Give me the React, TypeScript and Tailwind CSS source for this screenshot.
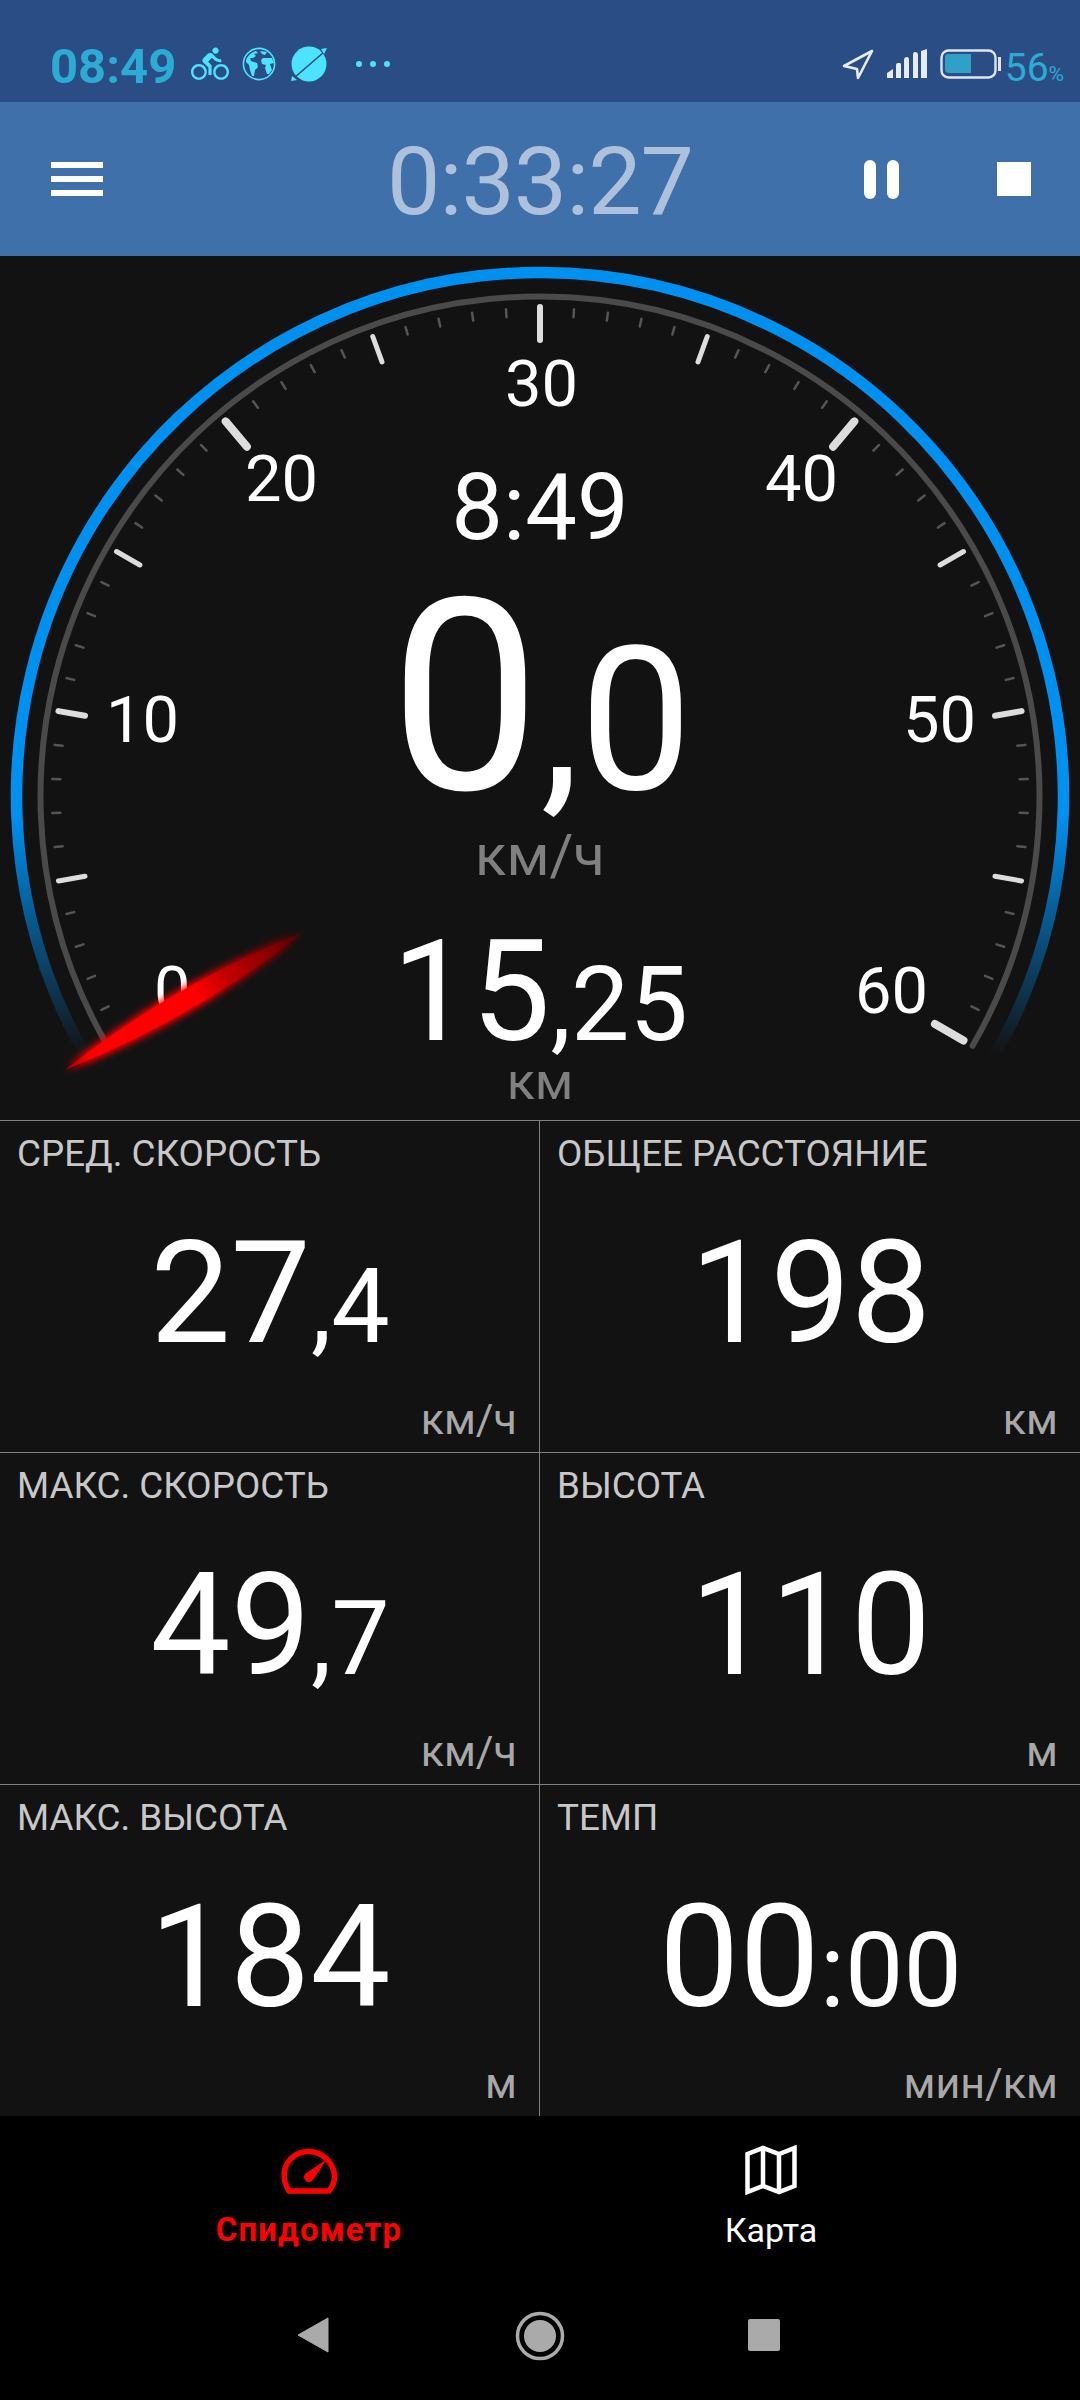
import React from "react";
import { MdDirectionsBike } from "react-icons/md";

const CX = 540;
const CY = 540; // centre of dial inside the gauge panel (796 - 256)

function polar(r: number, deg: number) {
  const a = (deg * Math.PI) / 180;
  return { x: CX + r * Math.sin(a), y: CY - r * Math.cos(a) };
}

function arc(r: number) {
  const s = polar(r, -120);
  const e = polar(r, 120);
  return `M ${s.x} ${s.y} A ${r} ${r} 0 1 1 ${e.x} ${e.y}`;
}

function Dial() {
  const ticks: React.ReactNode[] = [];
  for (let v = 0; v <= 60; v++) {
    const deg = -120 + v * 4;
    let r1 = 488, r2 = 480, w = 2.5, c = "#555555";
    if (v % 5 === 0) {
      c = "#dddddd";
      if (v % 10 === 0 && v !== 10 && v !== 50) {
        r1 = 489; r2 = 456; w = v === 30 ? 6 : 8;
      } else if (v === 10 || v === 50) {
        r1 = 489; r2 = 462; w = 6;
      } else {
        r1 = 489; r2 = 462; w = 5;
      }
    }
    const p = polar(r1, deg);
    const q = polar(r2, deg);
    ticks.push(<line key={v} x1={p.x} y1={p.y} x2={q.x} y2={q.y} stroke={c} strokeWidth={w} strokeLinecap="round" />);
  }
  return (
    <svg className="absolute left-0 top-0" width="1080" height="864" viewBox="0 0 1080 864">
      <defs>
        <linearGradient id="blue" gradientUnits="userSpaceOnUse" x1="0" y1="560" x2="0" y2="800">
          <stop offset="0" stopColor="#0090f0" />
          <stop offset="1" stopColor="#0090f0" stopOpacity="0" />
        </linearGradient>
      </defs>
      <path d={arc(523.5)} fill="none" stroke="url(#blue)" strokeWidth="11.5" />
      <path d={arc(499.5)} fill="none" stroke="#4a4a4a" strokeWidth="6" strokeLinecap="round" />
      {ticks}
    </svg>
  );
}

function Needle() {
  return (
    <svg className="absolute left-0 top-0 pointer-events-none" width="1080" height="864" viewBox="0 0 1080 864">
      <defs>
        <linearGradient id="needle" gradientUnits="userSpaceOnUse" x1="65" y1="814" x2="304" y2="676">
          <stop offset="0" stopColor="#a00000" />
          <stop offset="0.1" stopColor="#ff0000" />
          <stop offset="0.55" stopColor="#ff0000" />
          <stop offset="0.66" stopColor="#c80000" />
          <stop offset="0.88" stopColor="#800000" />
          <stop offset="1" stopColor="#500000" stopOpacity="0.6" />
        </linearGradient>
        <filter id="glow" x="-20%" y="-50%" width="140%" height="200%">
          <feGaussianBlur stdDeviation="4.5" result="b" />
          <feMerge>
            <feMergeNode in="b" />
            <feMergeNode in="b" />
            <feMergeNode in="SourceGraphic" />
          </feMerge>
        </filter>
      </defs>
      <path d="M 65 814 Q 194 762 304 676 Q 174 728 65 814 Z" fill="url(#needle)" filter="url(#glow)" />
    </svg>
  );
}

function Num({ big, small, bigSize, smallSize }: { big: string; small?: string; bigSize: string; smallSize?: string }) {
  return (
    <div className="flex items-baseline justify-center leading-none">
      <span className={bigSize}>{big}</span>
      {small ? <span className={smallSize}>{small}</span> : null}
    </div>
  );
}

function Cell({ label, big, small, unit, right }: { label: string; big: string; small?: string; unit: string; right?: boolean }) {
  return (
    <div className={`flex h-full flex-col border-t border-[#808080] ${right ? "pl-[17px] pr-[22px] border-l" : "pl-[17px] pr-[22px]"}`}>
      <div className="mt-[15px] text-[36.8px] leading-[36px] text-[#c8c8c8]">{label}</div>
      <div className="mt-[50px] pl-[6px] text-white">
        <Num big={big} small={small} bigSize="text-[143px] leading-none" smallSize="text-[104px] leading-none" />
      </div>
      <div className="mt-[33px] self-end text-[43px] leading-[43px] text-[#a8a8a8]">{unit}</div>
    </div>
  );
}

function DialNum({ children, className }: { children: React.ReactNode; className: string }) {
  return <span className={`absolute text-[65px] leading-none text-white ${className}`}>{children}</span>;
}

function Globe() {
  return (
    <svg width="34" height="34" viewBox="0 0 34 34">
      <circle cx="17" cy="17" r="15.6" fill="none" stroke="#4ce3ff" strokeWidth="1.6" />
      <path fill="#4ce3ff" d="M4 13 C6 8 10 5 14 4 L16 6 L12 7 L14 9 L11 11 L8 11 L9 14 L15 16 L16 20 L13 23 L12 29 L10 29 L8 23 L7 18 L4 15 Z" />
      <path fill="#4ce3ff" d="M18 4 L25 5 L23 8 L20 7 Z M21 11 L30 11 L32 16 L28 17 L30 23 L27 27 L25 27 L23 21 L24 18 L20 17 L19 13 Z" />
    </svg>
  );
}

function Planet() {
  return (
    <svg width="36" height="36" viewBox="0 0 36 36">
      <circle cx="18" cy="18" r="17.5" fill="#4ce3ff" />
      <path d="M3 32 L33 6" stroke="#2b4d85" strokeWidth="1.6" fill="none" />
      <path d="M30 3 L36 2 L33 8 Z M1 30 L0 35 L6 34 Z" fill="#4ce3ff" />
    </svg>
  );
}

function StatusBar() {
  return (
    <div className="flex h-[102px] items-start bg-[#2b4d85] pl-[50px] pr-[16px]">
      <div className="mt-[39px] text-[49px] font-bold leading-[56px] text-[#2bacd4]">08:49</div>
      <div className="ml-[15px] mt-[45px] text-[#4ce3ff]">
        <MdDirectionsBike size={38} />
      </div>
      <div className="ml-[13px] mt-[47px]"><Globe /></div>
      <div className="ml-[15px] mt-[46px]"><Planet /></div>
      <div className="ml-[29px] mt-[61px] flex gap-[8px]">
        <span className="h-[6px] w-[6px] rounded-full bg-[#4ce3ff]" />
        <span className="h-[6px] w-[6px] rounded-full bg-[#4ce3ff]" />
        <span className="h-[6px] w-[6px] rounded-full bg-[#4ce3ff]" />
      </div>
      <div className="ml-auto mt-[48px] flex items-start">
        <svg width="32" height="32" viewBox="0 0 32 32">
          <path d="M30 3 L2 18 L15 21 L16 30 Z" fill="none" stroke="#e6ecf6" strokeWidth="2.6" strokeLinejoin="round" />
        </svg>
        <svg className="ml-[12px]" width="42" height="30" viewBox="0 0 42 30">
          <path d="M1 30 V25 L7 21 V30 Z M10 30 V17 Q10 15 12 15 H14 Q15 15 15 17 V30 Z M18 30 V12 Q18 9 21 9 Q23 9 23 12 V30 Z M27 30 V7 Q27 4 29 4 Q32 4 32 7 V30 Z M35 30 V3 L41 1 V30 Z" fill="#e6ecf6" />
        </svg>
        <svg className="ml-[12px] mt-[1px]" width="62" height="30" viewBox="0 0 62 30">
          <rect x="1.5" y="1.5" width="54" height="27" rx="7" fill="none" stroke="#dfe6f2" strokeWidth="2.4" />
          <path d="M6 5 H31 V24 H9 Q5 24 5 20 V8 Q5 5 8 5 Z" fill="#31a0c6" />
          <rect x="58" y="8" width="3" height="14" fill="#dfe6f2" />
        </svg>
        <div className="ml-[3px] mt-[2px] flex items-baseline font-normal text-[#2bacd4]">
          <span className="text-[39px] leading-[36px]">56</span>
          <span className="text-[21px] leading-[36px]">%</span>
        </div>
      </div>
    </div>
  );
}

function Header() {
  return (
    <div className="relative flex h-[154px] items-center bg-[#3f70a9]">
      <div className="ml-[51px] flex w-[52px] flex-col gap-[8px]">
        <span className="h-[6px] bg-white" />
        <span className="h-[6px] bg-white" />
        <span className="h-[6px] bg-white" />
      </div>
      <div className="absolute left-0 right-0 top-[24px] text-center text-[95px] font-normal leading-[112px] tracking-[-1px] text-[#aec1dc]">0:33:27</div>
      <div className="ml-auto flex gap-[11px]">
        <span className="h-[39px] w-[12px] rounded-full bg-white" />
        <span className="h-[39px] w-[12px] rounded-full bg-white" />
      </div>
      <div className="ml-[98px] mr-[49px] h-[34px] w-[34px] bg-white" />
    </div>
  );
}

function Gauge() {
  return (
    <div className="relative h-[864px] overflow-hidden bg-[#121212]">
      <Dial />
      <DialNum className="left-[505px] top-[96px]">30</DialNum>
      <DialNum className="left-[245px] top-[191px]">20</DialNum>
      <DialNum className="left-[765px] top-[191px]">40</DialNum>
      <DialNum className="left-[106px] top-[432px]">10</DialNum>
      <DialNum className="left-[903px] top-[432px]">50</DialNum>
      <DialNum className="left-[855px] top-[703px]">60</DialNum>
      <div className="absolute left-[154px] top-[702px] h-[48px] w-[40px] overflow-hidden">
        <span className="block text-[65px] leading-none text-white">0</span>
      </div>
      <div className="absolute inset-x-0 top-0 flex flex-col items-center pt-[206px] text-white">
        <div className="text-[92px] leading-none">8:49</div>
        <div className="ml-[2px] mt-[9px]">
          <Num big="0" small=",0" bigSize="text-[268px] leading-none" smallSize="text-[200px] leading-none" />
        </div>
        <div className="-mt-[5px] text-[58px] leading-none text-[#808080]">км/ч</div>
        <div className="mt-[37px]">
          <Num big="15" small=",25" bigSize="text-[141px] leading-none" smallSize="text-[104px] leading-none" />
        </div>
        <div className="-mt-[6px] text-[52px] leading-none text-[#808080]">км</div>
      </div>
      <Needle />
    </div>
  );
}

function Grid() {
  return (
    <div className="grid h-[996px] grid-cols-[539px_541px] grid-rows-3 bg-[#121212]">
      <Cell label="СРЕД. СКОРОСТЬ" big="27" small=",4" unit="км/ч" />
      <Cell right label="ОБЩЕЕ РАССТОЯНИЕ" big="198" unit="км" />
      <Cell label="МАКС. СКОРОСТЬ" big="49" small=",7" unit="км/ч" />
      <Cell right label="ВЫСОТА" big="110" unit="м" />
      <Cell label="МАКС. ВЫСОТА" big="184" unit="м" />
      <Cell right label="ТЕМП" big="00" small=":00" unit="мин/км" />
    </div>
  );
}

function BottomNav() {
  return (
    <div className="flex h-[180px] items-start justify-center bg-black">
      <div className="flex w-[462px] flex-col items-center pt-[32px]">
        <svg width="58" height="46" viewBox="0 0 58 46">
          <path d="M9 43 C1 30 3 16 14 8 C26 0 42 3 50 15 C56 24 56 34 49 43 Z" fill="none" stroke="#ff0000" strokeWidth="5.5" strokeLinejoin="round" />
          <path d="M47 11 L33 32 A5 5 0 1 1 25 26 Z" fill="#ff0000" />
        </svg>
        <div className="mt-[17px] text-[33px] font-bold leading-[38px] tracking-[1.1px] text-[#ff0000]">Спидометр</div>
      </div>
      <div className="flex w-[462px] flex-col items-center pt-[29px]">
        <svg width="52" height="50" viewBox="0 0 52 50">
          <path d="M2.5 9 L18 3 L34 9 L49.5 3 V41 L34 47 L18 41 L2.5 47 Z M18 3 V41 M34 9 V47" fill="none" stroke="#ffffff" strokeWidth="4.5" />
        </svg>
        <div className="mt-[16px] text-[34px] leading-[38px] text-white">Карта</div>
      </div>
    </div>
  );
}

function SystemNav() {
  return (
    <div className="relative flex h-[104px] bg-black">
      <svg className="absolute left-[297px] top-[21px]" width="32" height="36" viewBox="0 0 32 36">
        <path d="M31 1 V35 L1 18 Z" fill="#aaaaaa" stroke="#aaaaaa" strokeWidth="1" strokeLinejoin="round" />
      </svg>
      <svg className="absolute left-[515px] top-[15px]" width="50" height="50" viewBox="0 0 50 50">
        <circle cx="25" cy="25" r="22.5" fill="none" stroke="#aaaaaa" strokeWidth="3.5" />
        <circle cx="25" cy="25" r="16" fill="#aaaaaa" />
      </svg>
      <div className="absolute left-[748px] top-[23px] h-[32px] w-[32px] rounded-[2px] bg-[#aaaaaa]" />
    </div>
  );
}

export default function App() {
  return (
    <div className="h-[2400px] w-[1080px] overflow-hidden bg-black font-[Roboto,sans-serif]">
      <StatusBar />
      <Header />
      <Gauge />
      <Grid />
      <BottomNav />
      <SystemNav />
    </div>
  );
}
